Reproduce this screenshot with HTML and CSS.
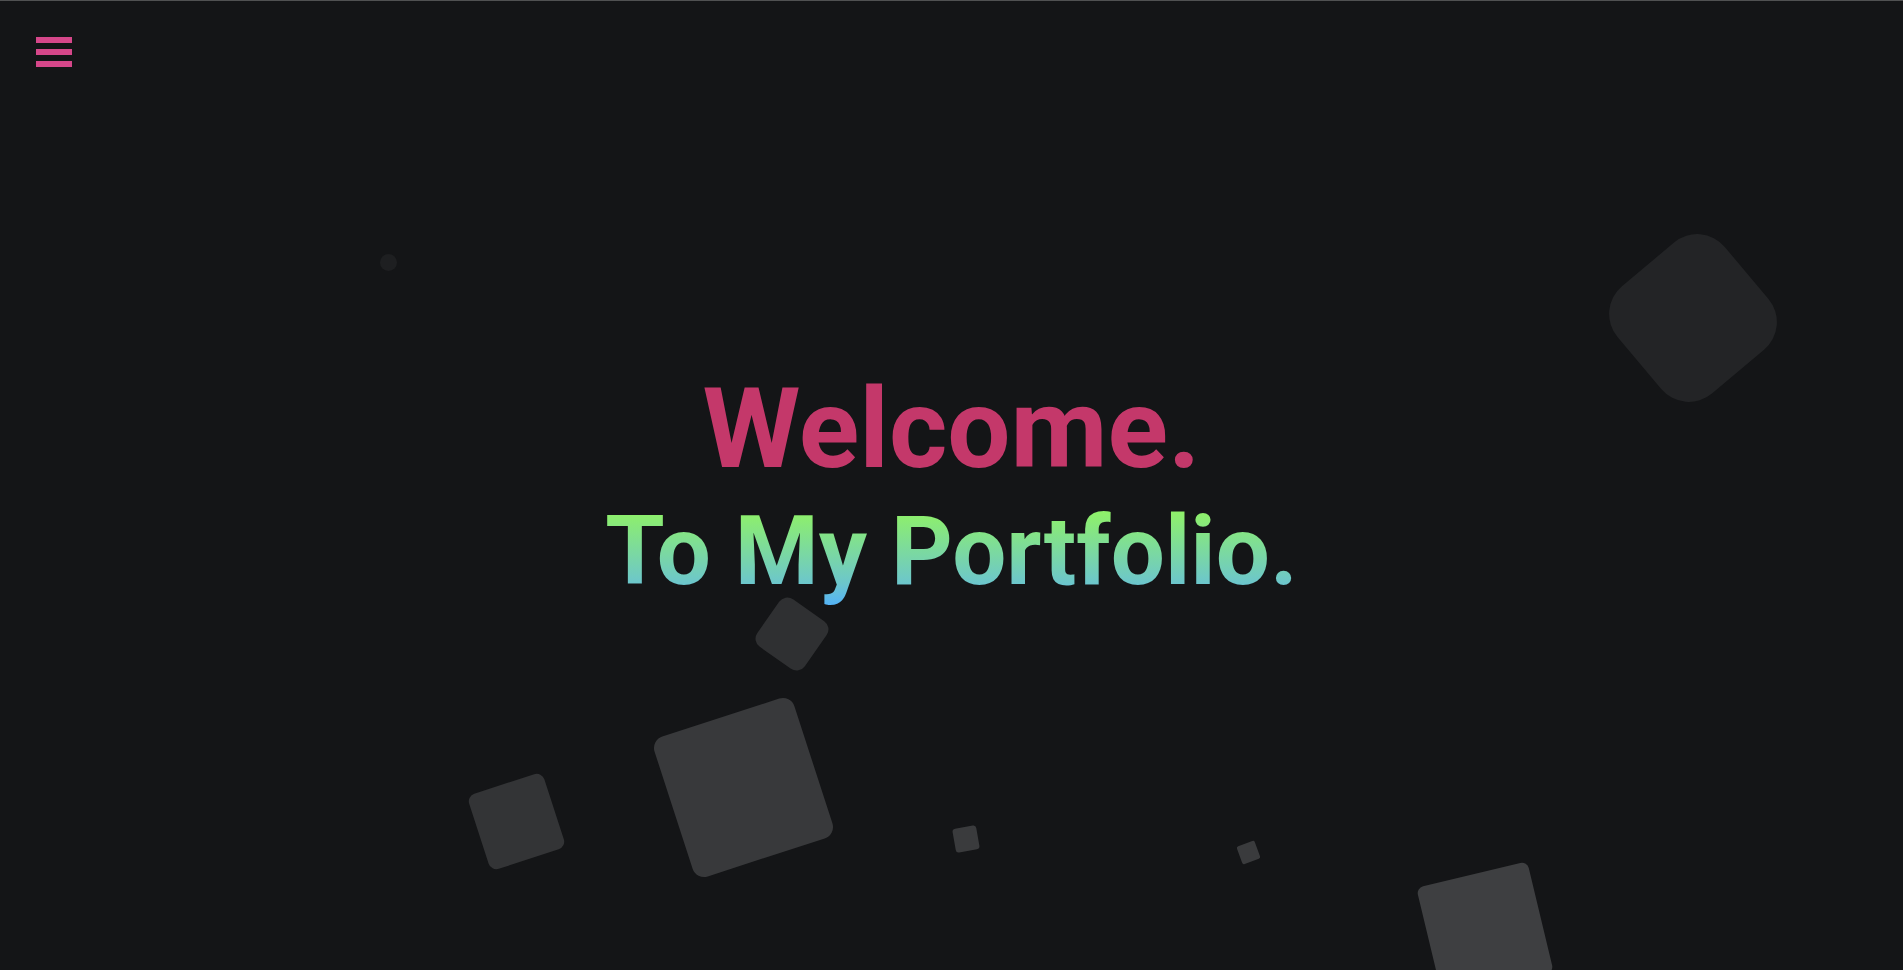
FILE: index.html
```html
<!DOCTYPE html>
<html lang="en">
<head>
    <meta charset="UTF-8">
    <meta name="viewport" content="width=device-width, initial-scale=1.0">
    <title>Portfolio</title>
    <link rel="stylesheet" href="styles.css">
</head>
<body>
    <header class="topbar">
        <button class="menu-btn" aria-label="Menu">
            <span></span>
            <span></span>
            <span></span>
        </button>
    </header>

    <ul class="shapes">
        <li class="shape s1"></li>
        <li class="shape s2"></li>
        <li class="shape s3"></li>
        <li class="shape s4"></li>
        <li class="shape s5"></li>
        <li class="shape s6"></li>
        <li class="shape s7"></li>
        <li class="shape s8"></li>
    </ul>

    <main class="hero">
        <h1 class="title">
            <span class="welcome">Welcome.</span>
            <span class="sub">To My Portfolio.</span>
        </h1>
    </main>
</body>
</html>
```

FILE: styles.css
```css
* {
    box-sizing: border-box;
}

html, body {
    height: 100%;
}

body {
    margin: 0;
    font-family: Roboto, 'Noto Sans', sans-serif;
    background-color: #141517;
    border-top: 1px solid #505152;
    overflow: hidden;
    position: relative;
}

.topbar {
    position: relative;
    z-index: 2;
    padding: 36px 36px 0;
}

.menu-btn {
    display: flex;
    flex-direction: column;
    gap: 6px;
    background: none;
    border: none;
    padding: 0;
    cursor: pointer;
}

.menu-btn span {
    display: block;
    width: 36px;
    height: 6px;
    background-color: #d6478a;
}

/* floating background squares */
.shapes {
    list-style: none;
    margin: 0;
    padding: 0;
    position: absolute;
    inset: 0;
    z-index: 0;
}

.shape {
    position: absolute;
    background-color: #38393b;
}

.s1 { left: 1623px; top: 247px; width: 140px; height: 140px; border-radius: 36px; transform: rotate(50deg); background-color: #232426; }
.s2 { left: 380px; top: 253px; width: 17px; height: 17px; border-radius: 50%; background-color: #1e1f21; }
.s3 { left: 763px; top: 604px; width: 58px; height: 58px; border-radius: 10px; transform: rotate(35deg); background-color: #2f3032; }
.s4 { left: 670px; top: 713px; width: 147px; height: 147px; border-radius: 12px; transform: rotate(-18deg); background-color: #38393b; }
.s5 { left: 477px; top: 781px; width: 79px; height: 79px; border-radius: 8px; transform: rotate(-18deg); background-color: #333436; }
.s6 { left: 954px; top: 826px; width: 24px; height: 24px; border-radius: 3px; transform: rotate(-10deg); background-color: #3a3b3d; }
.s7 { left: 1239px; top: 842px; width: 19px; height: 19px; border-radius: 2px; transform: rotate(-20deg); background-color: #3a3b3d; }
.s8 { left: 1428px; top: 872px; width: 114px; height: 114px; border-radius: 7px; transform: rotate(-13.5deg); background-color: #3e3f41; }

.hero {
    position: relative;
    z-index: 1;
    display: flex;
    justify-content: center;
    padding-top: 298px;
}

.title {
    margin: 0;
    display: flex;
    flex-direction: column;
    align-items: center;
    font-weight: 700;
    text-align: center;
}

.welcome {
    font-size: 112px;
    line-height: 128px;
    color: #c4386a;
}

.sub {
    font-size: 96px;
    line-height: 116px;
    background: linear-gradient(180deg, #8ef06a 17%, #6cc6cc 78%, #55b3f5 96%);
    -webkit-background-clip: text;
    background-clip: text;
    color: transparent;
}
```
